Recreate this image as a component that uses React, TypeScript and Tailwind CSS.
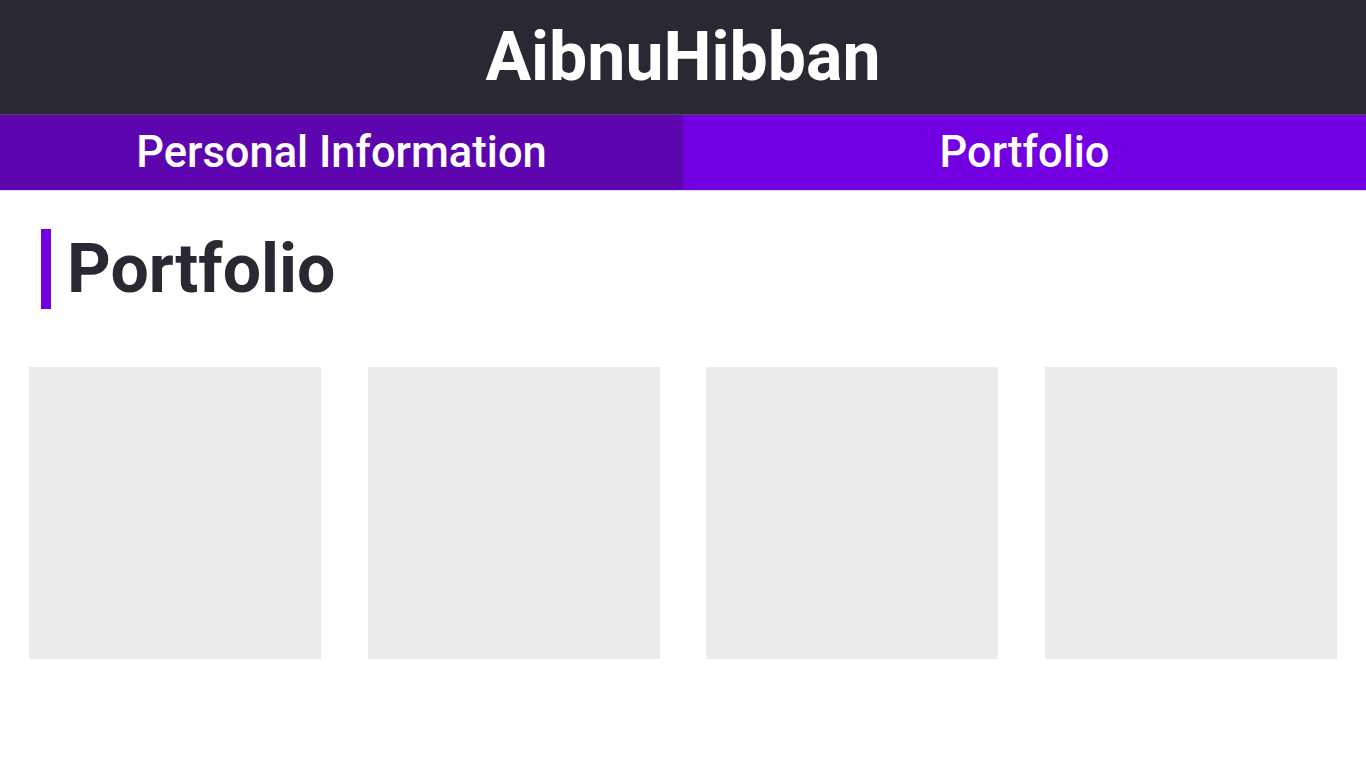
export default function App() {
  return (
    <div className="min-h-screen bg-white" style={{ fontFamily: "Roboto, 'Liberation Sans', sans-serif" }}>
      <header className="h-[115px] bg-[#2a2832] border-b border-[#4a4752] flex items-center justify-center">
        <h1 className="text-[68px] font-bold text-white leading-none">AibnuHibban</h1>
      </header>
      <nav className="grid grid-cols-2 h-[76px] border-b border-[#e3d5f3]">
        <a className="flex items-center justify-center bg-[#5d06b0] text-white text-[43.5px] font-medium">Personal Information</a>
        <a className="flex items-center justify-center bg-[#7300e3] text-white text-[43.5px] font-medium">Portfolio</a>
      </nav>
      <main className="px-[29px]">
        <div className="flex items-center mt-[38px] ml-[12px] gap-[16px]">
          <div className="w-[10px] h-[80px] bg-[#7300e3]" />
          <h2 className="text-[68px] font-bold text-[#2a2832] leading-none">Portfolio</h2>
        </div>
        <div className="grid grid-cols-4 gap-[46.67px] mt-[58px]">
          {[0, 1, 2, 3].map((i) => (
            <div key={i} className="aspect-square bg-[#ebebeb]" />
          ))}
        </div>
      </main>
    </div>
  );
}
